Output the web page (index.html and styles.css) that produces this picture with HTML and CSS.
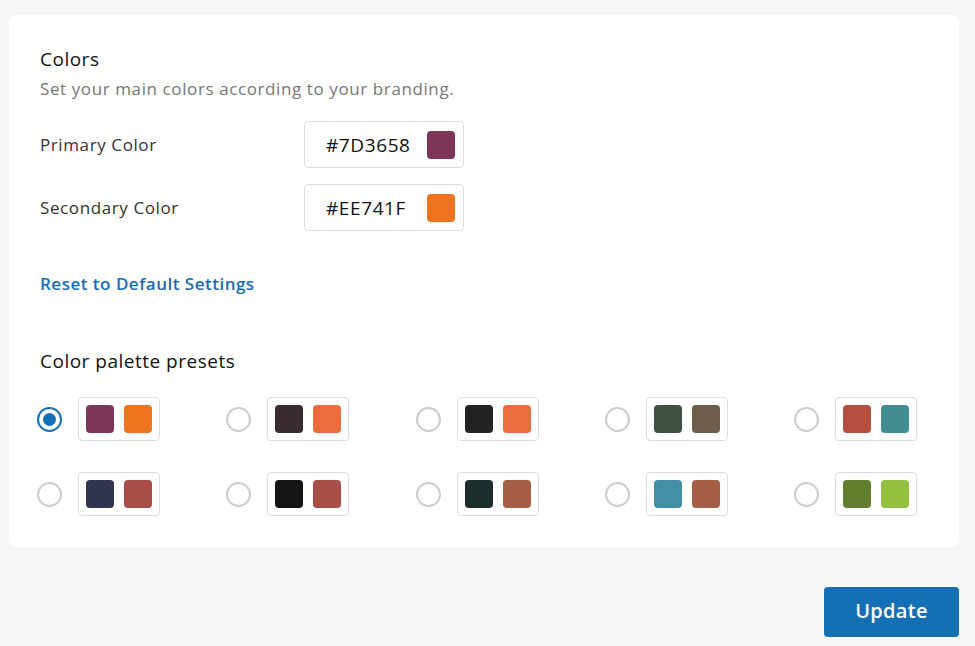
FILE: index.html
```html
<!DOCTYPE html>
<html>
<head>
<meta charset="utf-8">
<link rel="stylesheet" href="styles.css">
</head>
<body>
<div class="page">
  <section class="card">
    <h2 class="title">Colors</h2>
    <p class="subtitle">Set your main colors according to your branding.</p>
    <div class="field">
      <span class="label">Primary Color</span>
      <div class="color-input"><span class="hex">#7D3658</span><span class="sw" style="background:#7D3658"></span></div>
    </div>
    <div class="field">
      <span class="label">Secondary Color</span>
      <div class="color-input"><span class="hex">#EE741F</span><span class="sw" style="background:#EE741F"></span></div>
    </div>
    <a class="reset" href="#">Reset to Default Settings</a>
    <h2 class="title presets-title">Color palette presets</h2>
    <div class="presets">
      <label class="preset"><span class="radio checked"></span><span class="pair"><span class="sw" style="background:#7D3658"></span><span class="sw" style="background:#EE741F"></span></span></label>
      <label class="preset"><span class="radio"></span><span class="pair"><span class="sw" style="background:#382c30"></span><span class="sw" style="background:#ec6d3c"></span></span></label>
      <label class="preset"><span class="radio"></span><span class="pair"><span class="sw" style="background:#222222"></span><span class="sw" style="background:#ec6d3c"></span></span></label>
      <label class="preset"><span class="radio"></span><span class="pair"><span class="sw" style="background:#3f5142"></span><span class="sw" style="background:#6d5e4b"></span></span></label>
      <label class="preset"><span class="radio"></span><span class="pair"><span class="sw" style="background:#b24f40"></span><span class="sw" style="background:#418e92"></span></span></label>
      <label class="preset"><span class="radio"></span><span class="pair"><span class="sw" style="background:#31354f"></span><span class="sw" style="background:#a94d48"></span></span></label>
      <label class="preset"><span class="radio"></span><span class="pair"><span class="sw" style="background:#131414"></span><span class="sw" style="background:#a94d48"></span></span></label>
      <label class="preset"><span class="radio"></span><span class="pair"><span class="sw" style="background:#1b2e2c"></span><span class="sw" style="background:#a65f47"></span></span></label>
      <label class="preset"><span class="radio"></span><span class="pair"><span class="sw" style="background:#4290a3"></span><span class="sw" style="background:#a65f47"></span></span></label>
      <label class="preset"><span class="radio"></span><span class="pair"><span class="sw" style="background:#617d2e"></span><span class="sw" style="background:#94c042"></span></span></label>
    </div>
  </section>
  <div class="actions"><button class="update">Update</button></div>
</div>
</body>
</html>
```
FILE: styles.css
```css
* { box-sizing: border-box; }
html, body { margin: 0; padding: 0; }
body {
  background: #f6f6f6;
  font-family: "Open Sans", "Noto Sans", sans-serif;
  color: #222;
  width: 975px;
  height: 646px;
  overflow: hidden;
}
.page { padding: 15px 16px 0 9px; }
.card {
  background: #fff;
  border-radius: 8px;
  padding: 30px 31px 30px 31px;
  display: flex;
  flex-direction: column;
  align-items: flex-start;
  height: 532px;
}
.title {
  margin: 0;
  font-size: 19px;
  font-weight: 500;
  line-height: 28px;
  letter-spacing: 0.5px;
  color: #111;
}
.subtitle {
  margin: 4px 0 20px;
  font-size: 17px;
  line-height: 24px;
  letter-spacing: 0.6px;
  color: #777;
}
.field {
  display: flex;
  align-items: center;
  margin-bottom: 16px;
}
.label {
  width: 264px;
  font-size: 17px;
  letter-spacing: 0.6px;
  color: #333;
}
.color-input {
  width: 160px;
  height: 47px;
  border: 1px solid #ddd;
  border-radius: 4px;
  display: flex;
  align-items: center;
  justify-content: space-between;
  padding: 0 8px 0 21px;
}
.hex { font-size: 19px; letter-spacing: 0.6px; color: #111; }
.sw {
  display: block;
  width: 28px;
  height: 28px;
  border-radius: 4px;
}
.reset {
  margin-top: 25px;
  color: #1a6bb5;
  font-size: 17px;
  font-weight: 600;
  letter-spacing: 0.5px;
  text-decoration: none;
}
.presets-title { margin-top: 52px; }
.presets {
  margin-top: 22px;
  margin-left: -3px;
  display: grid;
  grid-template-columns: repeat(5, 189.25px);
  row-gap: 31px;
}
.preset { display: flex; align-items: center; gap: 16px; }
.radio {
  width: 25px;
  height: 25px;
  border: 2px solid #ccc;
  border-radius: 50%;
  display: flex;
  align-items: center;
  justify-content: center;
}
.radio.checked { border-color: #156fb4; }
.radio.checked::after {
  content: "";
  width: 13px;
  height: 13px;
  border-radius: 50%;
  background: #156fb4;
}
.pair {
  display: flex;
  gap: 10px;
  padding: 7px 7px;
  border: 1px solid #ddd;
  border-radius: 4px;
}
.actions { display: flex; justify-content: flex-end; margin-top: 40px; }
.update {
  width: 135px;
  height: 50px;
  background: #156fb4;
  color: #fff;
  border: 0;
  border-radius: 4px;
  font-family: inherit;
  font-size: 20px;
  font-weight: 600;
  letter-spacing: 0.3px;
  padding: 0 0 3px;
}
```
